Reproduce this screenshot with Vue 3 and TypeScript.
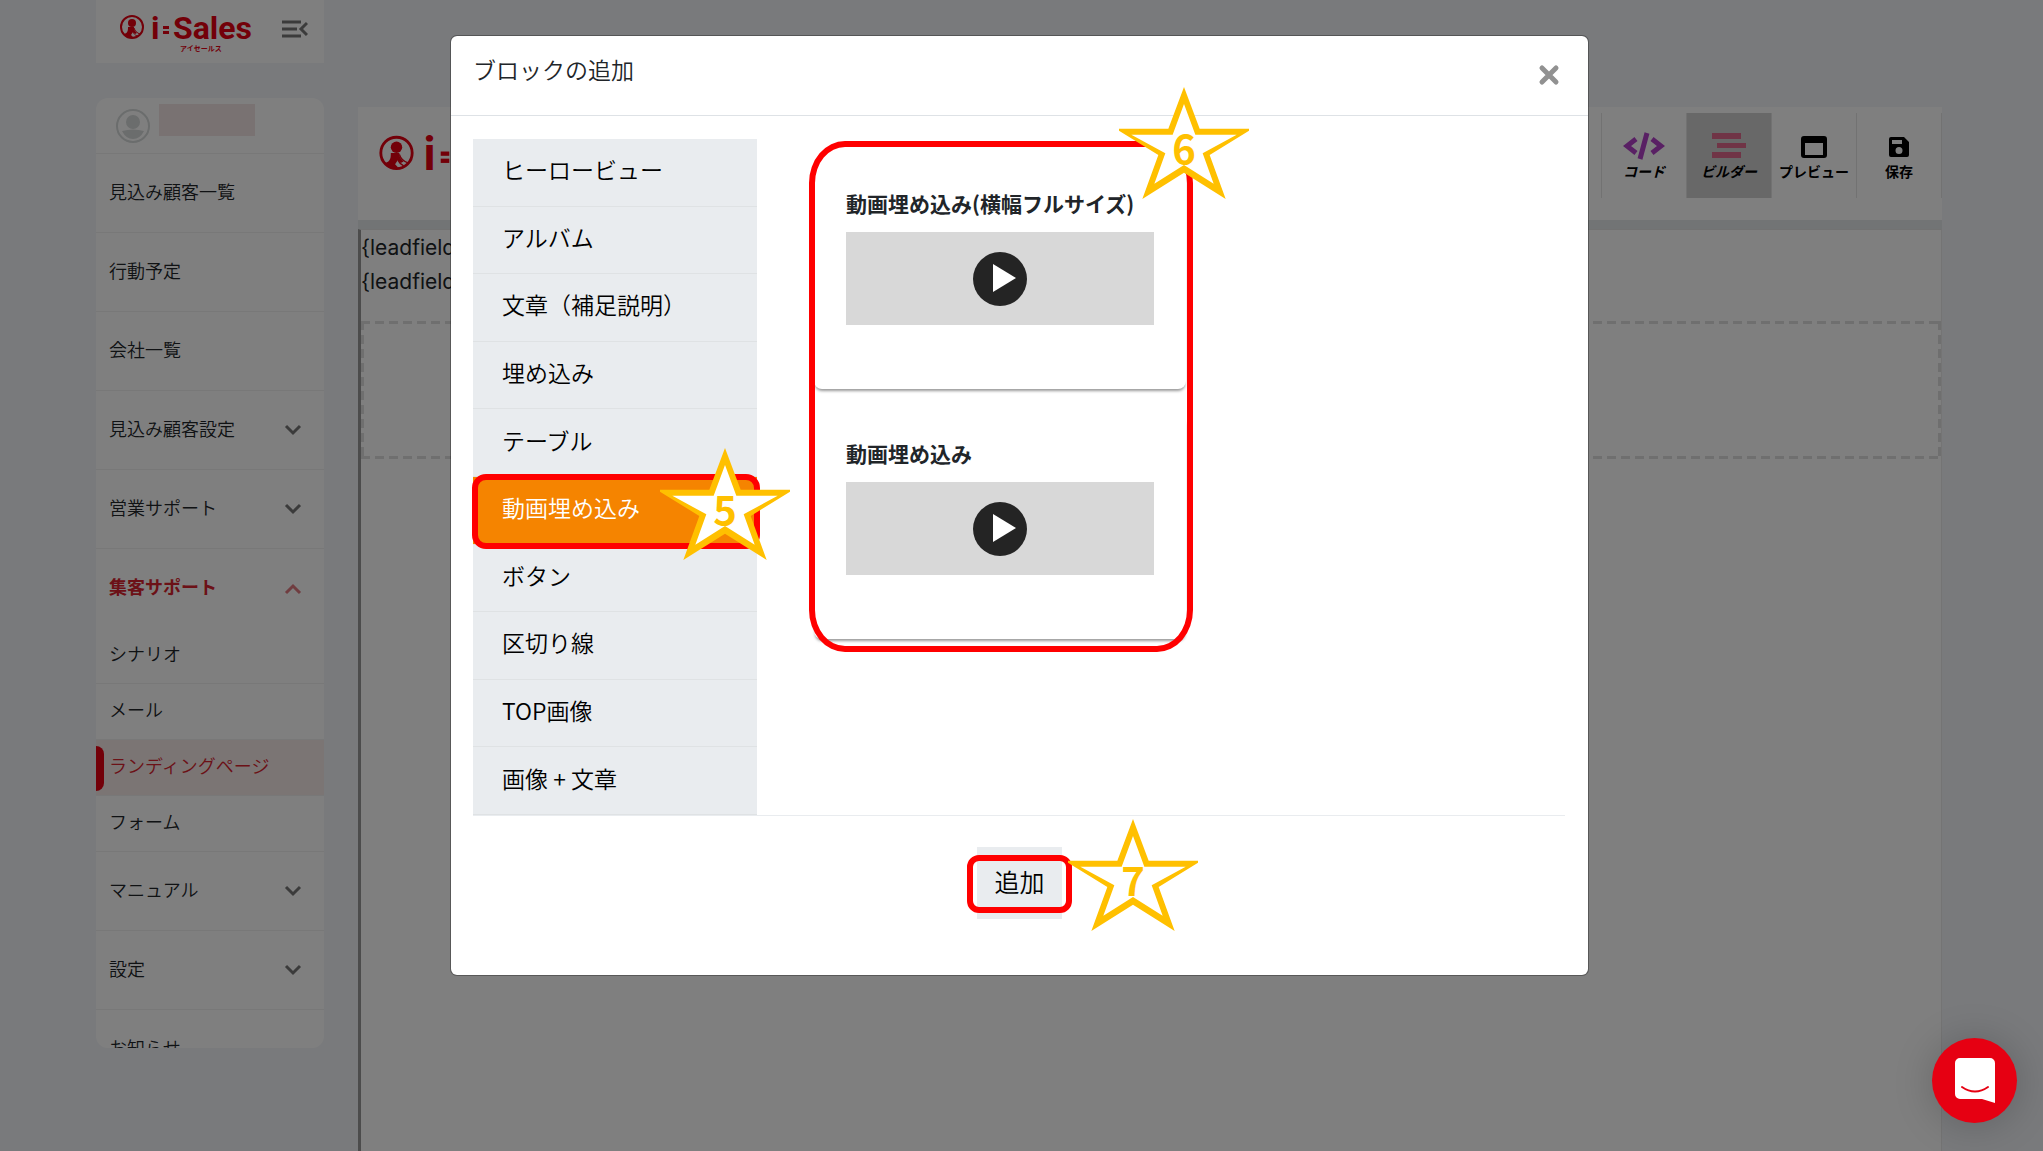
<script setup lang="ts">
import { ref } from 'vue'

interface MenuRow {
  label: string
  arrow?: boolean
}

const topRows: MenuRow[] = [
  { label: '見込み顧客一覧' },
  { label: '行動予定' },
  { label: '会社一覧' },
  { label: '見込み顧客設定', arrow: true },
  { label: '営業サポート', arrow: true },
]
const subRows: string[] = ['シナリオ', 'メール', 'ランディングページ', 'フォーム']
const bottomRows: MenuRow[] = [
  { label: 'マニュアル', arrow: true },
  { label: '設定', arrow: true },
  { label: 'お知らせ' },
]
const currentPage = 'ランディングページ'

const categories: string[] = [
  'ヒーロービュー',
  'アルバム',
  '文章（補足説明）',
  '埋め込み',
  'テーブル',
  '動画埋め込み',
  'ボタン',
  '区切り線',
  'TOP画像',
  '画像 + 文章',
]
const selected = ref('動画埋め込み')
const blocks: string[] = ['動画埋め込み(横幅フルサイズ)', '動画埋め込み']
const marks = [5, 6, 7]
</script>

<template>
  <div class="page">
    <svg class="defs" aria-hidden="true">
      <symbol id="logo" viewBox="0 -8 132 54">
        <circle cx="12" cy="13" r="11" fill="none" stroke="#e60012" stroke-width="2" />
        <circle cx="12" cy="9" r="4" fill="#e60012" />
        <path d="M10 13h4c0 3 1 4 3 6l-2 1-2-2-2 3 2 2-1 1c-4 0-7-1-8-4 4-1 4-4 4-7z" fill="#e60012" />
        <path d="M14 14c1 3 3 5 6 6M13 18c1 2 2 3 4 4" fill="none" stroke="#e60012" stroke-width="1" />
        <text class="logo-text" x="31" y="25" font-size="32">i</text>
        <rect x="43" y="12" width="6" height="3" fill="#e60012" />
        <rect x="43" y="17" width="6" height="3" fill="#e60012" />
        <text class="logo-text" x="53" y="25" font-size="32">Sales</text>
        <text class="logo-text" x="60" y="37" font-size="7">アイセールス</text>
      </symbol>
    </svg>

    <aside class="sidebar">
      <header class="brand">
        <svg class="brand-logo" role="img" aria-label="i:Sales"><use href="#logo" /></svg>
        <button class="fold" aria-label="メニューを閉じる">
          <svg width="26" height="18" viewBox="0 0 26 18" fill="none" stroke="#777" stroke-width="3">
            <path d="M0 2h19M0 9h15M0 16h19M25 3l-6 6 6 6" />
          </svg>
        </button>
      </header>
      <nav class="menu">
        <div class="profile">
          <svg width="34" height="34" viewBox="0 0 34 34">
            <circle cx="17" cy="17" r="16" fill="none" stroke="#d6dada" stroke-width="2" />
            <circle cx="17" cy="13" r="7" fill="#d6dada" />
            <path d="M6 22q11-3 22 0-4 8-11 8T6 22z" fill="#d6dada" />
          </svg>
          <span class="name"></span>
        </div>
        <a v-for="row in topRows" :key="row.label" class="row" href="#">
          {{ row.label }}
          <svg v-if="row.arrow" class="arrow" viewBox="0 0 18 12"><path d="M2 2l7 7 7-7" /></svg>
        </a>
        <a class="row open" href="#">
          集客サポート
          <svg class="arrow" viewBox="0 0 18 12"><path d="M2 10l7-7 7 7" /></svg>
        </a>
        <a v-for="label in subRows" :key="label" class="row sub" :class="{ current: label === currentPage }" href="#">{{ label }}</a>
        <a v-for="row in bottomRows" :key="row.label" class="row" href="#">
          {{ row.label }}
          <svg v-if="row.arrow" class="arrow" viewBox="0 0 18 12"><path d="M2 2l7 7 7-7" /></svg>
        </a>
      </nav>
    </aside>

    <main class="editor">
      <header class="bar">
        <svg class="bar-logo" role="img" aria-label="i:Sales"><use href="#logo" /></svg>
        <div class="tools">
          <button class="tool slanted">
            <svg width="42" height="28" viewBox="0 0 42 28" fill="none" stroke="#b341c9" stroke-width="5">
              <path d="M13 7L4 14l9 7M29 7l9 7-9 7M24 1l-7 26" />
            </svg>
            コード
          </button>
          <button class="tool slanted pressed">
            <svg width="34" height="28" viewBox="0 0 34 28" fill="#e0688c">
              <path d="M0 1h29v6H0zM5 11h29v5H5zM0 20h29v6H0z" />
            </svg>
            ビルダー
          </button>
          <button class="tool">
            <svg width="26" height="28" viewBox="0 0 26 28">
              <path fill-rule="evenodd" d="M3 4h20a3 3 0 0 1 3 3v16a3 3 0 0 1-3 3H3a3 3 0 0 1-3-3V7a3 3 0 0 1 3-3zm1 7v12h18V11z" />
            </svg>
            プレビュー
          </button>
          <button class="tool">
            <svg width="20" height="28" viewBox="0 0 20 28">
              <path fill-rule="evenodd" d="M2 5h13l5 5v13a2 2 0 0 1-2 2H2a2 2 0 0 1-2-2V7a2 2 0 0 1 2-2zm1 3v4h10V8zm7 7a3 3 0 1 0 0 7 3 3 0 0 0 0-7z" />
            </svg>
            保存
          </button>
        </div>
      </header>
      <section class="canvas">
        <p class="merge">{leadfield</p>
        <p class="merge">{leadfield</p>
        <div class="drop"></div>
      </section>
    </main>

    <div class="backdrop">
      <section class="dialog" role="dialog" aria-modal="true" aria-labelledby="dialog-title">
        <header class="dialog-head">
          <h1 id="dialog-title">ブロックの追加</h1>
          <button class="close" aria-label="閉じる">
            <svg width="22" height="22" viewBox="0 0 22 22"><path d="M4 4l14 14M18 4L4 18" stroke="#919191" stroke-width="5" stroke-linecap="round" /></svg>
          </button>
        </header>
        <div class="dialog-body">
          <nav class="categories">
            <button
              v-for="c in categories"
              :key="c"
              class="category"
              :class="{ active: c === selected }"
              @click="selected = c"
            >{{ c }}</button>
          </nav>
          <div class="blocks">
            <button v-for="b in blocks" :key="b" class="block">
              <span class="block-title">{{ b }}</span>
              <span class="thumb">
                <svg width="54" height="54" viewBox="0 0 54 54">
                  <circle cx="27" cy="27" r="27" fill="#242424" />
                  <path d="M20 12v28l23-14z" fill="#fff" />
                </svg>
              </span>
            </button>
          </div>
        </div>
        <footer class="dialog-foot">
          <button class="add">追加</button>
        </footer>

        <i class="frame frame-5"></i>
        <i class="frame frame-6"></i>
        <i class="frame frame-7"></i>
        <div v-for="n in marks" :key="n" class="star" :class="'star-' + n">
          <svg viewBox="0 0 390 336">
            <path fill="#ffc000" d="M195 0l47 125h148v6l-118 73 48 132-125-79L70 336l48-132L0 131v-6h148z" />
            <path fill="#fff" d="M195 51l34 92h124l-102 56 33 91-89-56-89 56 33-91L37 143h124z" />
          </svg>
          <b>{{ n }}</b>
        </div>
      </section>
    </div>

    <button class="chat" aria-label="チャット">
      <svg width="40" height="46" viewBox="0 0 40 46">
        <path d="M5 0h30a5 5 0 0 1 5 5v40l-13-4H5a5 5 0 0 1-5-5V5a5 5 0 0 1 5-5z" fill="#fff" />
        <path d="M7 29q13 9 26 0" fill="none" stroke="#e60012" stroke-width="2" stroke-linecap="round" />
      </svg>
    </button>
  </div>
</template>

<style>
body {
  margin: 0;
}
</style>

<style scoped>
* {
  box-sizing: border-box;
}
button {
  border: 0;
  background: none;
  padding: 0;
  font: inherit;
  color: inherit;
}
.page {
  display: flex;
  gap: 34px;
  height: 100vh;
  padding: 0 101px 0 96px;
  overflow: hidden;
  position: relative;
  background: #f3f5f9;
  color: #212529;
  font-family: 'Noto Sans CJK JP', sans-serif;
  font-weight: 350;
  font-size: 18px;
}
.defs {
  position: absolute;
  width: 0;
  height: 0;
}
.logo-text {
  font-family: Roboto, 'Noto Sans CJK JP', sans-serif;
  font-weight: 700;
  fill: #e60012;
}

.sidebar {
  flex: 0 0 228px;
  display: flex;
  flex-direction: column;
  gap: 35px;
  padding-bottom: 103px;
}
.brand {
  flex: none;
  display: flex;
  justify-content: space-between;
  align-items: flex-start;
  height: 63px;
  padding: 6px 16px 0 24px;
  background: #fff;
}
.brand-logo {
  width: 132px;
  height: 54px;
}
.fold {
  margin-top: 14px;
  line-height: 0;
}
.menu {
  flex: 1;
  min-height: 0;
  overflow: hidden;
  border-radius: 12px;
  background: #fff;
}
.profile {
  display: flex;
  gap: 9px;
  height: 56px;
  padding: 6px 20px;
  border-bottom: 1px solid #f1f1f1;
}
.profile svg {
  margin-top: 5px;
}
.name {
  width: 96px;
  height: 32px;
  background: #f2e4e4;
}
.row {
  display: flex;
  justify-content: space-between;
  align-items: center;
  height: 79px;
  padding: 0 22px 5px 13px;
  border-bottom: 1px solid #f1f1f1;
  color: inherit;
  text-decoration: none;
}
.arrow {
  width: 18px;
  height: 12px;
  margin-top: 5px;
  fill: none;
  stroke: #777;
  stroke-width: 3;
}
.open {
  border-bottom: 0;
  color: #d8232e;
  font-weight: 700;
}
.open .arrow {
  stroke: #e07a80;
}
.sub {
  height: 56px;
}
.current {
  position: relative;
  background: #f6eae9;
  color: #d8232e;
}
.current::before {
  content: '';
  position: absolute;
  left: 0;
  top: 6px;
  width: 8px;
  height: 45px;
  border-radius: 0 8px 8px 0;
  background: #e60012;
}

.editor {
  flex: 1;
  display: flex;
  flex-direction: column;
  padding-top: 107px;
}
.bar {
  display: flex;
  justify-content: space-between;
  align-items: flex-start;
  height: 122px;
  padding-top: 6px;
  border-bottom: 9px solid #e4e8eb;
  background: #fff;
}
.bar-logo {
  width: 189px;
  height: 77px;
  margin: 10px 0 0 21px;
}
.tools {
  display: flex;
  border-left: 1px solid #e4e4e4;
}
.tool {
  display: flex;
  flex-direction: column;
  align-items: center;
  gap: 3px;
  width: 85px;
  height: 85px;
  padding-top: 19px;
  border-right: 1px solid #e4e4e4;
  color: #000;
  font-size: 14px;
  line-height: 16px;
  font-weight: 700;
  white-space: nowrap;
}
.slanted {
  font-style: italic;
}
.pressed {
  background: #d0d0d0;
}
.canvas {
  flex: 1;
  border-left: 3px solid #999;
  border-top: 1px solid #e4e4e4;
  border-right: 1px solid #e9e9e9;
  background: #fff;
}
.merge {
  margin: 0;
  font-family: Inter, sans-serif;
  font-weight: 400;
  font-size: 21px;
  line-height: 34px;
}
.merge:first-child {
  padding-top: 1px;
}
.drop {
  --dash: #dedede 0 9px, transparent 9px 14px;
  height: 138px;
  margin-top: 22px;
  background:
    repeating-linear-gradient(90deg, var(--dash)) top / 100% 3px no-repeat,
    repeating-linear-gradient(90deg, var(--dash)) bottom / 100% 3px no-repeat,
    repeating-linear-gradient(180deg, var(--dash)) left / 3px 100% no-repeat,
    repeating-linear-gradient(180deg, var(--dash)) right / 3px 100% no-repeat;
}

.backdrop {
  position: absolute;
  inset: 0;
  padding: 35px 4px 0 0;
  background: rgba(0, 0, 0, 0.5);
}
.dialog {
  position: relative;
  width: 90%;
  max-width: 1139px;
  margin: 0 auto;
  border: 1px solid rgba(0, 0, 0, 0.3);
  border-radius: 7px;
  background: #fff;
  background-clip: padding-box;
}
.dialog-head {
  display: flex;
  justify-content: space-between;
  align-items: flex-start;
  height: 80px;
  padding: 17px 28px 0 22px;
  border-bottom: 1px solid #dee2e6;
}
.dialog-head h1 {
  margin: 0;
  font-size: 23px;
  line-height: 32px;
  font-weight: inherit;
}
.close {
  margin-top: 11px;
  line-height: 0;
}
.dialog-body {
  display: flex;
  margin: 23px 23px 0 22px;
  border-bottom: 1px solid #e9ecef;
}
.categories {
  display: flex;
  flex-direction: column;
  flex: 0 0 284px;
  height: 676px;
  background: #e9ecef;
}
.category {
  flex: 1;
  padding: 0 0 6px 29px;
  border-bottom: 1px solid #dfe2e4;
  color: #000;
  font-size: 23px;
  text-align: left;
}
.active {
  background: #f58400;
  color: #fff;
}
.blocks {
  display: flex;
  flex-direction: column;
  gap: 26px;
  padding: 26px 0 0 57px;
}
.block {
  display: flex;
  flex-direction: column;
  gap: 13px;
  width: 372px;
  height: 224px;
  padding: 22px 32px 0;
  border-radius: 8px;
  box-shadow: 0 3px 3px -1px rgba(0, 0, 0, 0.4);
  text-align: left;
}
.block-title {
  font-size: 21px;
  line-height: 32px;
  font-weight: 700;
  white-space: nowrap;
}
.thumb {
  display: flex;
  justify-content: center;
  align-items: center;
  height: 93px;
  background: #d8d8d8;
}
.dialog-foot {
  display: flex;
  justify-content: center;
  padding: 31px 0 56px;
}
.add {
  width: 85px;
  height: 72px;
  padding-bottom: 4px;
  background: #e9ecef;
  color: #000;
  font-size: 25px;
}

.frame {
  position: absolute;
  border: 6px solid #f00;
  pointer-events: none;
}
.frame-5 {
  left: 21px;
  top: 438px;
  width: 288px;
  height: 75px;
  border-radius: 14px;
}
.frame-6 {
  left: 358px;
  top: 105px;
  width: 384px;
  height: 511px;
  border-radius: 36px / 42px;
}
.frame-7 {
  left: 516px;
  top: 819px;
  width: 105px;
  height: 58px;
  border-radius: 12px;
}
.star {
  position: absolute;
  display: flex;
  justify-content: center;
  width: 130px;
  height: 112px;
  color: #ffc000;
  font-size: 40px;
  line-height: 40px;
}
.star svg {
  position: absolute;
  inset: 0;
}
.star b {
  position: relative;
  margin-top: 40px;
  font-weight: 700;
}
.star-5 {
  left: 209px;
  top: 412px;
}
.star-6 {
  left: 668px;
  top: 51px;
}
.star-7 {
  left: 617px;
  top: 783px;
}

.chat {
  position: absolute;
  right: 26px;
  bottom: 28px;
  display: flex;
  justify-content: center;
  align-items: center;
  width: 85px;
  height: 85px;
  border-radius: 50%;
  background: #e60012;
  box-shadow: 0 2px 40px rgba(0, 0, 0, 0.2);
}
</style>
